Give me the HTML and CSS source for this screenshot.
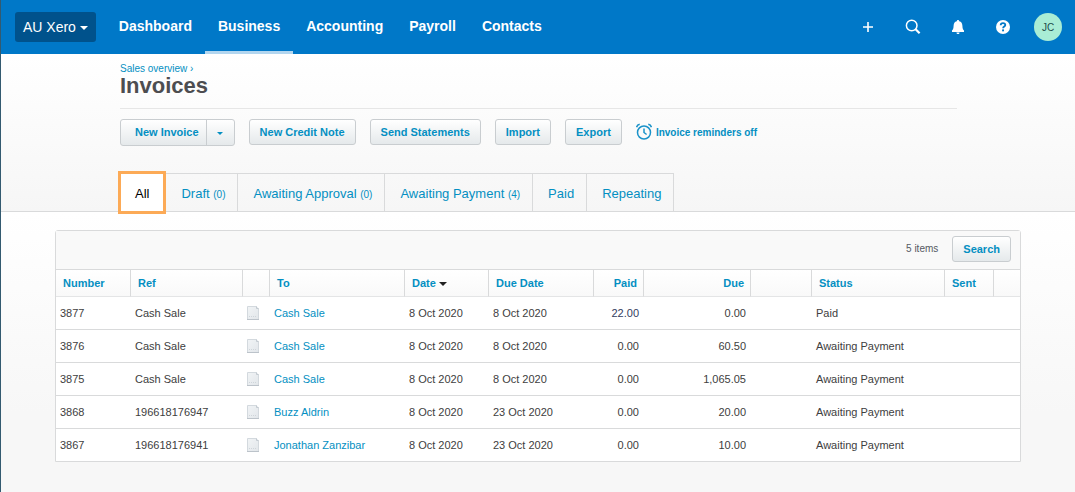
FILE: index.html
```html
<!DOCTYPE html>
<html lang="en">
<head>
<meta charset="utf-8">
<title>Invoices</title>
<link rel="stylesheet" href="styles.css">
</head>
<body>
<header class="topbar">
  <button class="org" type="button">AU Xero <span class="caret"></span></button>
  <nav class="nav" aria-label="Main">
    <a href="#">Dashboard</a>
    <a href="#" class="current">Business</a>
    <a href="#">Accounting</a>
    <a href="#">Payroll</a>
    <a href="#">Contacts</a>
  </nav>
  <div class="tools">
    <button type="button" aria-label="Create"><svg width="16" height="16" viewBox="0 0 16 16"><path d="M8 3v10M3 8h10" fill="none" stroke="#fff" stroke-width="1.6"/></svg></button>
    <button type="button" aria-label="Find"><svg width="16" height="16" viewBox="0 0 16 16"><circle cx="6.700" cy="6.500" r="5.300" fill="none" stroke="#fff" stroke-width="1.500"/><path d="M10.600 10.200l4 4" stroke="#fff" stroke-width="2.200" fill="none"/></svg></button>
    <button type="button" aria-label="Notifications"><svg width="16" height="16" viewBox="0 0 16 16"><path d="M8 1c.7 0 1.100.5 1.200 1.200C11.400 2.700 12.300 4.500 12.400 6.700c.1 2.700.5 3.900 1.600 4.700v1.600H2v-1.600c1.100-.8 1.500-2 1.600-4.700C3.700 4.500 4.600 2.700 6.800 2.200 6.900 1.500 7.300 1 8 1zM6.500 13.500h3c0 1-.6 1.500-1.500 1.500s-1.500-.5-1.500-1.500z" fill="#fff"/></svg></button>
    <button type="button" aria-label="Help"><svg width="16" height="16" viewBox="0 0 16 16"><circle cx="8" cy="8" r="7" fill="#fff"/><path d="M5.700 6.300c0-1.500 1-2.200 2.300-2.200s2.300.8 2.300 2c0 1.500-2.200 1.500-2.200 3.100" fill="none" stroke="#0078c8" stroke-width="1.800"/><rect x="7.100" y="10.400" width="1.900" height="1.900" fill="#0078c8"/></svg></button>
    <button type="button" class="avatar" aria-label="Account JC">JC</button>
  </div>
</header>

<section class="heading">
  <div class="title">
    <a href="#" class="crumb">Sales overview ›</a>
    <h1>Invoices</h1>
  </div>
  <div class="actions">
    <div class="split">
      <button type="button">New Invoice</button>
      <button type="button" class="more" aria-label="More new invoice options"><span class="caret"></span></button>
    </div>
    <button type="button" class="btn">New Credit Note</button>
    <button type="button" class="btn">Send Statements</button>
    <button type="button" class="btn">Import</button>
    <button type="button" class="btn">Export</button>
    <a href="#" class="reminders"><svg width="16" height="18" viewBox="0 0 16 18"><g fill="none" stroke="#1a92c9" stroke-width="1.500"><circle cx="8" cy="9.500" r="6.500"/><path d="M8 5.500V9.500l2.600 2"/><path d="M.6 4.200C1 2.600 2 1.600 3.700 1.200M15.400 4.200C15 2.600 14 1.600 12.300 1.200"/></g></svg>Invoice reminders off</a>
  </div>
  <nav class="tabs" aria-label="Invoice status">
    <a href="#" class="active">All</a>
    <a href="#">Draft <small>(0)</small></a>
    <a href="#">Awaiting Approval <small>(0)</small></a>
    <a href="#">Awaiting Payment <small>(4)</small></a>
    <a href="#">Paid</a>
    <a href="#">Repeating</a>
  </nav>
</section>

<main class="content">
  <svg class="defs" width="0" height="0" aria-hidden="true">
    <defs><linearGradient id="paper" x1="0" y1="0" x2="1" y2="1"><stop offset="0" stop-color="#f1f4f6"/><stop offset="1" stop-color="#e2e6ea"/></linearGradient></defs>
    <symbol id="doc" viewBox="0 0 12 14"><path d="M.5.5h9l2 2v11H.5z" fill="url(#paper)" stroke="#d3d9de"/><path d="M9.500.5v2h2" fill="#fff" stroke="#c3cad1"/><path d="M0 13.500h12" stroke="#bcc3ca"/><path d="M2 10.500h8" stroke="#cfd5da" stroke-dasharray="1 1"/></symbol>
  </svg>
  <div class="panel">
    <div class="panel-bar">
      <span class="total">5 items</span>
      <button type="button" class="btn">Search</button>
    </div>
    <table>
      <colgroup><col class="c-number"><col class="c-ref"><col class="c-doc"><col class="c-to"><col class="c-date"><col class="c-duedate"><col class="c-paid"><col class="c-due"><col class="c-gap"><col class="c-status"><col class="c-sent"><col class="c-end"></colgroup>
      <thead>
        <tr><th><a href="#">Number</a></th><th><a href="#">Ref</a></th><th></th><th><a href="#">To</a></th><th><a href="#">Date <span class="caret"></span></a></th><th><a href="#">Due Date</a></th><th class="num"><a href="#">Paid</a></th><th class="num"><a href="#">Due</a></th><th></th><th><a href="#">Status</a></th><th><a href="#">Sent</a></th><th></th></tr>
      </thead>
      <tbody>
        <tr><td>3877</td><td>Cash Sale</td><td><svg class="doc"><use href="#doc"/></svg></td><td><a href="#">Cash Sale</a></td><td>8 Oct 2020</td><td>8 Oct 2020</td><td class="num paid">22.00</td><td class="num">0.00</td><td></td><td>Paid</td><td></td><td></td></tr>
        <tr><td>3876</td><td>Cash Sale</td><td><svg class="doc"><use href="#doc"/></svg></td><td><a href="#">Cash Sale</a></td><td>8 Oct 2020</td><td>8 Oct 2020</td><td class="num">0.00</td><td class="num">60.50</td><td></td><td>Awaiting Payment</td><td></td><td></td></tr>
        <tr><td>3875</td><td>Cash Sale</td><td><svg class="doc"><use href="#doc"/></svg></td><td><a href="#">Cash Sale</a></td><td>8 Oct 2020</td><td>8 Oct 2020</td><td class="num">0.00</td><td class="num">1,065.05</td><td></td><td>Awaiting Payment</td><td></td><td></td></tr>
        <tr><td>3868</td><td>196618176947</td><td><svg class="doc"><use href="#doc"/></svg></td><td><a href="#">Buzz Aldrin</a></td><td>8 Oct 2020</td><td>23 Oct 2020</td><td class="num">0.00</td><td class="num">20.00</td><td></td><td>Awaiting Payment</td><td></td><td></td></tr>
        <tr><td>3867</td><td>196618176941</td><td><svg class="doc"><use href="#doc"/></svg></td><td><a href="#">Jonathan Zanzibar</a></td><td>8 Oct 2020</td><td>23 Oct 2020</td><td class="num">0.00</td><td class="num">10.00</td><td></td><td>Awaiting Payment</td><td></td><td></td></tr>
      </tbody>
    </table>
  </div>
</main>
</body>
</html>
```
FILE: styles.css
```css
* { box-sizing: border-box; }

body {
  margin: 0;
  min-height: 100vh;
  display: flex;
  flex-direction: column;
  border-left: 1px solid #335a70;
  font-family: "Liberation Sans", Arial, sans-serif;
  font-size: 11px;
  color: #404756;
  background: #fff;
}

a { color: #048fc2; text-decoration: none; }
button { font-family: inherit; margin: 0; cursor: pointer; }
svg { display: block; }

.caret {
  display: inline-block;
  border: 4px solid transparent;
  border-top-color: currentColor;
  border-bottom: 0;
  vertical-align: middle;
}

/* Top bar */
.topbar {
  display: flex;
  align-items: center;
  height: 54px;
  padding: 0 13px 0 14px;
  background: #0078c8;
}
.org {
  height: 30px;
  padding: 0 8px;
  border: 0;
  border-radius: 3px;
  background: #00528c;
  color: #fff;
  font-size: 14px;
  white-space: nowrap;
}
.nav { display: flex; align-self: stretch; margin-left: 10px; }
.nav a {
  display: flex;
  align-items: center;
  padding: 0 13px;
  border-bottom: 3px solid transparent;
  color: #fff;
  font-size: 14px;
  font-weight: bold;
}
.nav .current { border-bottom-color: #b3d6ef; }
.tools { display: flex; align-items: center; gap: 29px; margin-left: auto; }
.tools button {
  display: grid;
  place-items: center;
  width: 16px;
  height: 16px;
  padding: 0;
  border: 0;
  background: none;
}
.tools .avatar {
  width: 28px;
  height: 28px;
  margin-left: -6px;
  border-radius: 50%;
  background: #a9edd5;
  color: #1d4c4a;
  font-size: 10px;
}

/* Page heading */
.heading {
  padding: 8px 118px 0 119px;
  border-bottom: 1px solid #d9dadb;
  background: linear-gradient(#fff, #f6f6f6);
}
.title { height: 47px; border-bottom: 1px solid #e6e6e6; }
.crumb { display: block; font-size: 10px; line-height: 14px; }
h1 { margin: 0; color: #4d4d50; font-size: 22px; line-height: 20px; }

.actions { display: flex; align-items: flex-start; gap: 14px; margin-top: 10px; }
.btn, .split {
  border: 1px solid #c9cdd0;
  border-radius: 3px;
  background: linear-gradient(#fff, #e5e9eb);
}
.btn, .split button {
  color: #048fc2;
  font-size: 11px;
  font-weight: bold;
  white-space: nowrap;
}
.btn { height: 26px; padding: 0 10px; }
.split { display: flex; height: 27px; }
.split button { padding: 0 7px 2px 14px; border: 0; background: none; }
.split .more { width: 28px; padding: 0; border-left: 1px solid #c9cdd0; }
.split .caret { border-width: 3px 3px 0; }
.reminders {
  display: flex;
  align-items: center;
  gap: 4px;
  height: 26px;
  font-size: 10px;
  font-weight: bold;
  white-space: nowrap;
}

.tabs { display: flex; margin-top: 27px; }
.tabs a {
  height: 38px;
  padding: 0 12px 0 15px;
  border-top: 1px solid #d9dadb;
  border-right: 1px solid #d9dadb;
  font-size: 13px;
  line-height: 40px;
  white-space: nowrap;
}
.tabs small { font-size: 10px; }
.tabs .active {
  position: relative;
  height: 43px;
  margin: -2px 0 -3px -2px;
  padding: 0 14px;
  border: 3px solid #fcaa56;
  background: #fff;
  color: #000;
}

/* Invoice list */
.content {
  flex: 1;
  padding: 18px 54px 30px;
  background: linear-gradient(#fff, #f7f7f7 200px);
}
.defs { position: absolute; }
.panel { border: 1px solid #d9dadb; border-radius: 3px 3px 0 0; background: #fff; }
.panel-bar {
  display: flex;
  align-items: center;
  justify-content: flex-end;
  gap: 14px;
  height: 38px;
  padding: 0 9px 2px;
  background: #f9f9f9;
}
.total { padding-bottom: 2px; color: #555a63; font-size: 10px; }
table { width: 100%; border-collapse: separate; border-spacing: 0; table-layout: fixed; }
.c-number { width: 75px; }
.c-ref { width: 112px; }
.c-doc { width: 27px; }
.c-to { width: 135px; }
.c-date { width: 84px; }
.c-duedate { width: 105px; }
.c-paid { width: 50px; }
.c-due { width: 107px; }
.c-gap { width: 61px; }
.c-status { width: 133px; }
.c-sent { width: 49px; }
.c-end { width: 26px; }
th {
  height: 28px;
  padding: 0 6px 0 7px;
  border-top: 1px solid #d9dadb;
  border-right: 1px solid #d9dadb;
  border-bottom: 1px solid #e4e5e6;
  background: linear-gradient(#fff, #f9f9f9);
  text-align: left;
  white-space: nowrap;
}
th:last-child { border-right: 0; }
th .caret { color: #222; }
td {
  height: 33px;
  padding: 0 5px 0 4px;
  border-bottom: 1px solid #d9dadb;
  color: #404040;
  white-space: nowrap;
}
tr:last-child td { height: 32px; border-bottom: 0; }
.num { text-align: right; }
.paid { color: #333c60; }
.doc { width: 12px; height: 14px; }
```
